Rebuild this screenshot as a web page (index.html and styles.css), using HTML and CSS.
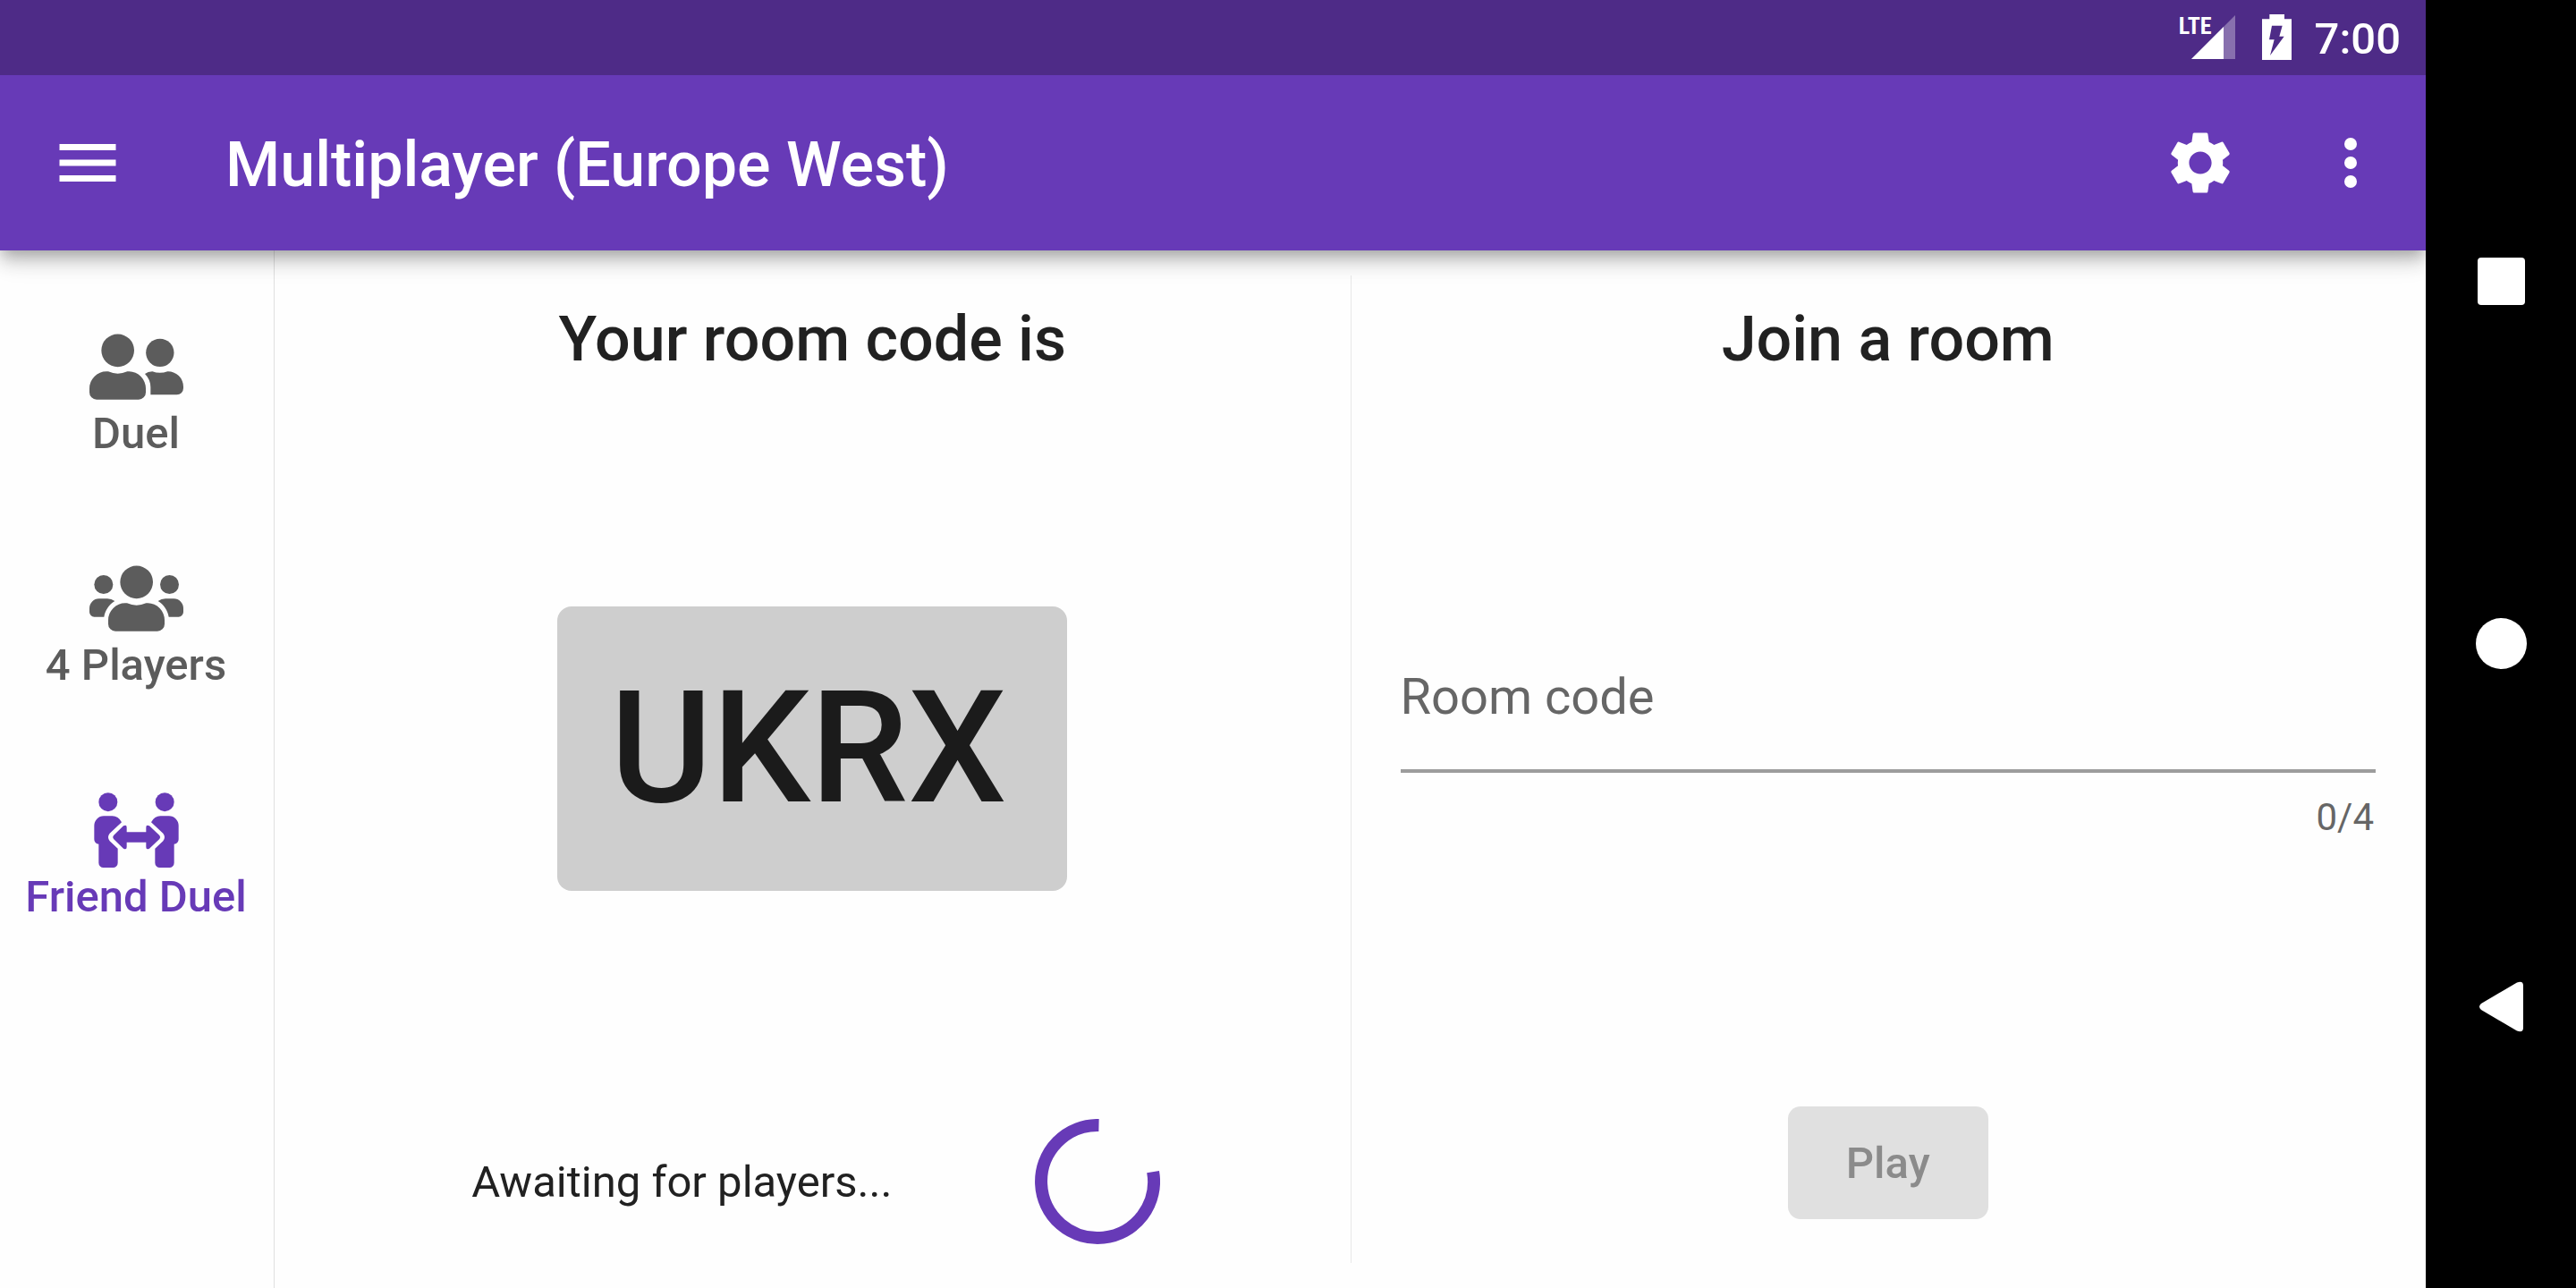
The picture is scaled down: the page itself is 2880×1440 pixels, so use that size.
FILE: index.html
```html
<!DOCTYPE html>
<html lang="en">
<head>
<meta charset="utf-8">
<meta name="viewport" content="width=device-width, initial-scale=1">
<title>Multiplayer</title>
<link rel="stylesheet" href="styles.css">
</head>
<body>
<div class="device">
  <div class="app">
    <div class="status-bar">
      <div class="signal">
        <span class="signal-type">LTE</span>
        <svg class="signal-icon" viewBox="0 0 49 49" aria-hidden="true"><path d="M49 0V49H0Z" fill="#fff" opacity=".33"/><path d="M36 13V49H0Z" fill="#fff"/></svg>
      </div>
      <svg class="battery-icon" viewBox="0 0 99 153" aria-hidden="true"><path fill="#fff" fill-rule="evenodd" d="M25 0H75V16H99V153H0V16H25ZM33 38L24 85H41L27 138L74 74H58L68 38Z"/></svg>
      <time class="clock">7:00</time>
    </div>
    <header class="app-bar">
      <button class="icon-button" type="button" aria-label="Menu">
        <svg class="icon" viewBox="0 0 24 24"><path d="M3 18h18v-2H3zm0-5h18v-2H3zm0-7v2h18V6z"/></svg>
      </button>
      <h1 class="title">Multiplayer (Europe West)</h1>
      <button class="icon-button" type="button" aria-label="Settings">
        <svg class="icon" viewBox="0 0 24 24"><path d="M19.14 12.94c.04-.3.06-.61.06-.94 0-.32-.02-.64-.07-.94l2.03-1.58c.18-.14.23-.41.12-.61l-1.92-3.32c-.12-.22-.37-.29-.59-.22l-2.39.96c-.5-.38-1.03-.7-1.62-.94l-.36-2.54c-.04-.24-.24-.41-.48-.41h-3.84c-.24 0-.43.17-.47.41l-.36 2.54c-.59.24-1.13.57-1.62.94l-2.39-.96c-.22-.08-.47 0-.59.22L2.74 8.87c-.12.21-.08.47.12.61l2.03 1.58c-.05.3-.09.63-.09.94s.02.64.07.94l-2.03 1.58c-.18.14-.23.41-.12.61l1.92 3.32c.12.22.37.29.59.22l2.39-.96c.5.38 1.03.7 1.62.94l.36 2.54c.05.24.24.41.48.41h3.84c.24 0 .44-.17.47-.41l.36-2.54c.59-.24 1.13-.56 1.62-.94l2.39.96c.22.08.47 0 .59-.22l1.92-3.32c.12-.22.07-.47-.12-.61l-2.01-1.58zM12 15.6c-1.98 0-3.6-1.62-3.6-3.6s1.62-3.6 3.6-3.6 3.6 1.62 3.6 3.6-1.62 3.6-3.6 3.6z"/></svg>
      </button>
      <button class="icon-button" type="button" aria-label="More options">
        <svg class="icon" viewBox="0 0 24 24"><circle cx="12" cy="6" r="2"/><circle cx="12" cy="12" r="2"/><circle cx="12" cy="18" r="2"/></svg>
      </button>
    </header>
    <div class="content">
      <nav class="rail" aria-label="Game modes">
        <a class="rail-item" href="#duel">
          <svg class="rail-icon" viewBox="0 0 315 252" aria-hidden="true"><circle cx="95" cy="71.500" r="55"/><circle cx="236.500" cy="79" r="47"/><path d="M57 142h6q32 14 64 0h6a57 57 0 0 1 56 57v13a24 24 0 0 1-24 24H24a24 24 0 0 1-24-24v-13a57 57 0 0 1 57-57z"/><path d="M186 150q10-8 25-8q25 9 51 0a51 51 0 0 1 53 51v5a22 22 0 0 1-22 22H205v-25q0-26-19-45z"/></svg>
          <span>Duel</span>
        </a>
        <a class="rail-item" href="#four-players">
          <svg class="rail-icon" viewBox="0 0 315 252" aria-hidden="true"><circle cx="158" cy="71.500" r="55"/><circle cx="47.500" cy="79.500" r="31.500"/><circle cx="268.500" cy="79.500" r="31.500"/><path d="M120 142h6q32 14 64 0h6a57 57 0 0 1 56 57v13a24 24 0 0 1-24 24H87a24 24 0 0 1-24-24v-13a57 57 0 0 1 57-57z"/><path id="side" d="M32 127h28q14 0 25 8C66 147 53 165 49 188H16a16 16 0 0 1-16-16v-13a32 32 0 0 1 32-32z"/><use href="#side" transform="translate(315 0) scale(-1 1)"/></svg>
          <span>4 Players</span>
        </a>
        <a class="rail-item rail-item-active" href="#friend-duel" aria-current="page">
          <svg class="rail-icon" viewBox="0 0 315 252" aria-hidden="true"><g id="person"><circle cx="62.500" cy="32" r="31.500"/><path d="M48 79h29q20 0 31 21L68 137q-10 13 0 26L95 188v48a16 16 0 0 1-16 16H47a16 16 0 0 1-16-16v-63a15 15 0 0 1-15-16v-46a32 32 0 0 1 32-32z"/></g><use href="#person" transform="translate(315 0) scale(-1 1)"/><path d="M81 144L114 112q11-6 11 5v16h65v-16q0-11 11-5L235 144q5 6 0 12L201 188q-11 6-11-5v-16h-65v16q0 11-11 5L81 156q-5-6 0-12z"/></svg>
          <span>Friend Duel</span>
        </a>
      </nav>
      <main class="panels">
        <section class="panel">
          <h2 class="heading">Your room code is</h2>
          <div class="code-card">UKRX</div>
          <div class="waiting" role="status">
            <span class="waiting-text">Awaiting for players...</span>
            <svg class="spinner" viewBox="0 0 140 140" aria-hidden="true"><path d="M132.100 59.100A63 63 0 1 1 71.500 7" fill="none" stroke="#673ab7" stroke-width="14"/></svg>
          </div>
        </section>
        <form class="panel panel-join">
          <h2 class="heading">Join a room</h2>
          <div class="field">
            <input class="field-input" id="room-code" type="text" maxlength="4" autocomplete="off" placeholder=" ">
            <label class="field-label" for="room-code">Room code</label>
            <span class="field-counter">0/4</span>
          </div>
          <button class="play" type="submit" disabled>Play</button>
        </form>
      </main>
    </div>
  </div>
  <div class="system-nav">
    <button class="system-button" type="button" aria-label="Recent apps"><svg class="system-icon" viewBox="0 0 57 57"><rect x="2" y="2" width="53" height="53" rx="4"/></svg></button>
    <button class="system-button" type="button" aria-label="Home"><svg class="system-icon" viewBox="0 0 57 57"><circle cx="28.500" cy="28.500" r="28.500"/></svg></button>
    <button class="system-button" type="button" aria-label="Back"><svg class="system-icon" viewBox="0 0 57 57"><path d="M6 25L46 1.500Q53 -1 53 5V52Q53 58 46 55.500L6 32Q2 28.500 6 25Z"/></svg></button>
  </div>
</div>
</body>
</html>
```
FILE: styles.css
```css
* {
  box-sizing: border-box;
}

body {
  margin: 0;
  background: #fefefe;
  color: #212121;
  font-family: Roboto, "Liberation Sans", sans-serif;
  font-size: 49px;
  line-height: 58px;
}

button {
  padding: 0;
  border: 0;
  background: none;
  font: inherit;
}

h1,
h2 {
  margin: 0;
  font-size: 70px;
  font-weight: 500;
  line-height: 86px;
}

.device {
  display: flex;
  min-height: 100vh;
}

.app {
  flex: 1;
  min-width: 0;
  display: flex;
  flex-direction: column;
}

/* Status bar */

.status-bar {
  position: relative;
  z-index: 2;
  display: flex;
  align-items: center;
  justify-content: flex-end;
  height: 84px;
  padding-right: 28px;
  padding-bottom: 2px;
  background: #4e2b87;
  color: #fff;
}

.signal {
  display: flex;
  align-items: flex-start;
  margin-right: 30px;
}

.signal-type {
  margin-right: -23px;
  font-family: "Roboto Condensed", "Liberation Sans Narrow", "Open Sans Condensed", "Liberation Sans", sans-serif;
  font-size: 26px;
  font-weight: 700;
  line-height: 24px;
}

.signal-icon {
  width: 49px;
  height: 49px;
}

.battery-icon {
  width: 33px;
  height: 51px;
  margin-right: 26px;
}

.clock {
  padding-top: 6px;
  font-weight: 500;
}

/* App bar */

.app-bar {
  position: relative;
  z-index: 1;
  display: flex;
  align-items: center;
  height: 196px;
  background: #673ab7;
  color: #fff;
  box-shadow: 0 7px 14px -4px rgba(0, 0, 0, .2), 0 14px 18px 0 rgba(0, 0, 0, .14), 0 4px 35px 0 rgba(0, 0, 0, .12);
}

.title {
  flex: 1;
  padding-top: 4px;
  padding-left: 56px;
}

.icon-button {
  display: flex;
  align-items: center;
  justify-content: center;
  width: 168px;
  height: 168px;
}

.icon-button:first-child {
  width: 196px;
}

.icon {
  width: 84px;
  height: 84px;
  fill: #fff;
}

/* Navigation rail */

.content {
  flex: 1;
  display: flex;
}

.rail {
  flex: none;
  display: flex;
  flex-direction: column;
  gap: 113px;
  width: 307px;
  padding-top: 88px;
  padding-right: 2px;
  border-right: 1px solid #e0e0e0;
}

.rail-item {
  display: flex;
  flex-direction: column;
  align-items: center;
  gap: 4px;
  color: #5c5c5c;
  font-weight: 500;
  text-decoration: none;
  white-space: nowrap;
}

.rail-item-active {
  color: #673ab7;
}

.rail-icon {
  width: 105px;
  height: 84px;
  fill: currentColor;
}

/* Panels */

.panels {
  position: relative;
  flex: 1;
  display: grid;
  grid-template-columns: 1fr 1fr;
}

.panels::after {
  content: "";
  position: absolute;
  top: 28px;
  bottom: 28px;
  left: 50%;
  width: 1px;
  background: #e8e8e8;
}

.panel {
  display: grid;
  grid-template-rows: auto 1fr auto;
  align-items: center;
  justify-items: center;
  padding: 56px 56px 49px;
}

.panel-join {
  padding-bottom: 77px;
}

.code-card {
  padding: 56px 68px 56px 59px;
  border-radius: 16px;
  background: #cecece;
  color: #1b1b1b;
  font-size: 174px;
  font-weight: 500;
  line-height: 206px;
}

.waiting {
  display: flex;
  align-items: center;
  gap: 160px;
  padding-left: 8px;
}

.waiting-text {
  padding-top: 2px;
}

.spinner {
  width: 140px;
  height: 140px;
}

.field {
  display: grid;
  width: 100%;
  padding-bottom: 18px;
  color: #666;
}

.field-input,
.field-label {
  grid-area: 1 / 1;
  font-size: 56px;
}

.field-input {
  width: 100%;
  height: 166px;
  padding: 0;
  border: 0;
  border-bottom: 4px solid #9c9c9c;
  border-radius: 0;
  background: none;
  color: #212121;
  font-family: inherit;
  outline: 0;
}

.field-label {
  align-self: center;
  justify-self: start;
  padding-bottom: 4px;
  pointer-events: none;
}

.field-input:not(:placeholder-shown) + .field-label {
  visibility: hidden;
}

.field-counter {
  margin-top: 21px;
  padding-right: 2px;
  justify-self: end;
  font-size: 42px;
}

.play {
  width: 224px;
  height: 126px;
  padding-top: 2px;
  border-radius: 14px;
  background: #e0e0e0;
  color: #8b8b8b;
  font-weight: 500;
}

/* System navigation */

.system-nav {
  position: relative;
  z-index: 2;
  flex: none;
  display: flex;
  flex-direction: column;
  width: 168px;
  padding: 112px 0;
  background: #000;
}

.system-button {
  flex: 1;
  display: flex;
  align-items: center;
  justify-content: center;
}

.system-icon {
  width: 57px;
  height: 57px;
  fill: #fff;
}
```
